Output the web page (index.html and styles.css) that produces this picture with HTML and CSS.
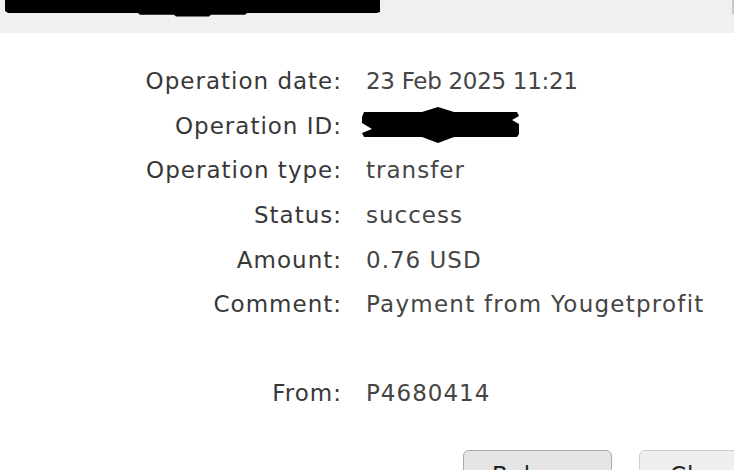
FILE: index.html
```html
<!DOCTYPE html>
<html>
<head>
<meta charset="utf-8">
<link rel="stylesheet" href="styles.css">
</head>
<body>
<div class="topbar">
  <svg class="redact-top" width="380" height="17" viewBox="0 0 380 17"><polygon points="5,0 380,0 380,12 377,13 247,13 245,14.7 211,14.7 209,16.4 176,16.4 174,14.7 140,14.7 138,13 8,13 5,11" fill="#000"/></svg>
  <span class="edge"></span>
</div>
<div class="details">
  <div class="label">Operation date:</div><div class="value value-date">23 Feb 2025 11:21</div>
  <div class="label">Operation ID:</div><div class="value"><svg class="redact-id" width="158" height="36" viewBox="0 0 158 36"><polygon points="2,5 60,5 76,0 92,5 155,5 157,9 150,13 157,17 157,27 155,30 92,30 76,36 60,30 2,30 0,26 10,22 0,16 0,10" fill="#000"/></svg></div>
  <div class="label">Operation type:</div><div class="value">transfer</div>
  <div class="label">Status:</div><div class="value">success</div>
  <div class="label">Amount:</div><div class="value">0.76 USD</div>
  <div class="label">Comment:</div><div class="value value-wide">Payment from Yougetprofit</div>
  <div class="label"></div><div class="value"></div>
  <div class="label">From:</div><div class="value">P4680414</div>
</div>
<div class="actions">
  <button class="btn btn-dark">Balance</button>
  <button class="btn btn-light">Close</button>
</div>
</body>
</html>
```
FILE: styles.css
```css
html, body {
  margin: 0;
  padding: 0;
  background: #ffffff;
  overflow: hidden;
}
body {
  width: 734px;
  height: 470px;
  font-family: "DejaVu Sans", "Open Sans", sans-serif;
  color: #444444;
}
.topbar {
  height: 33px;
  background: #f0f0f0;
  position: relative;
}
.redact-top {
  display: block;
}
.edge {
  position: absolute;
  right: 0;
  top: 0;
  width: 2px;
  height: 14px;
  background: #c8c8c8;
}
.details {
  display: grid;
  grid-template-columns: 341px 1fr;
  column-gap: 25px;
  grid-auto-rows: 44.6px;
  align-items: center;
  padding-top: 26px;
  font-size: 23px;
  line-height: 26px;
  letter-spacing: 1px;
}
.label {
  text-align: right;
  color: #383838;
  margin-right: -1px;
}
.value {
  color: #454545;
  white-space: nowrap;
}
.value-date {
  letter-spacing: -0.3px;
}
.value-wide {
  letter-spacing: 1.25px;
}
.redact-id {
  display: block;
  margin-left: -4px;
  margin-top: -1px;
}
.actions {
  display: flex;
  gap: 27px;
  padding-left: 463px;
  padding-top: 34px;
}
.btn {
  flex: none;
  height: 40px;
  border-radius: 6px;
  font-family: "DejaVu Sans", sans-serif;
  font-size: 23px;
  letter-spacing: 1px;
  line-height: 26px;
  text-align: left;
  padding: 11px 0 0 28px;
  box-sizing: border-box;
  color: #222;
}
.btn-dark {
  width: 149px;
  background: #e5e5e5;
  border: 1px solid #a9a9a9;
}
.btn-light {
  width: 120px;
  background: #efefef;
  border: 1px solid #cfcfcf;
  padding-left: 30px;
}
```
